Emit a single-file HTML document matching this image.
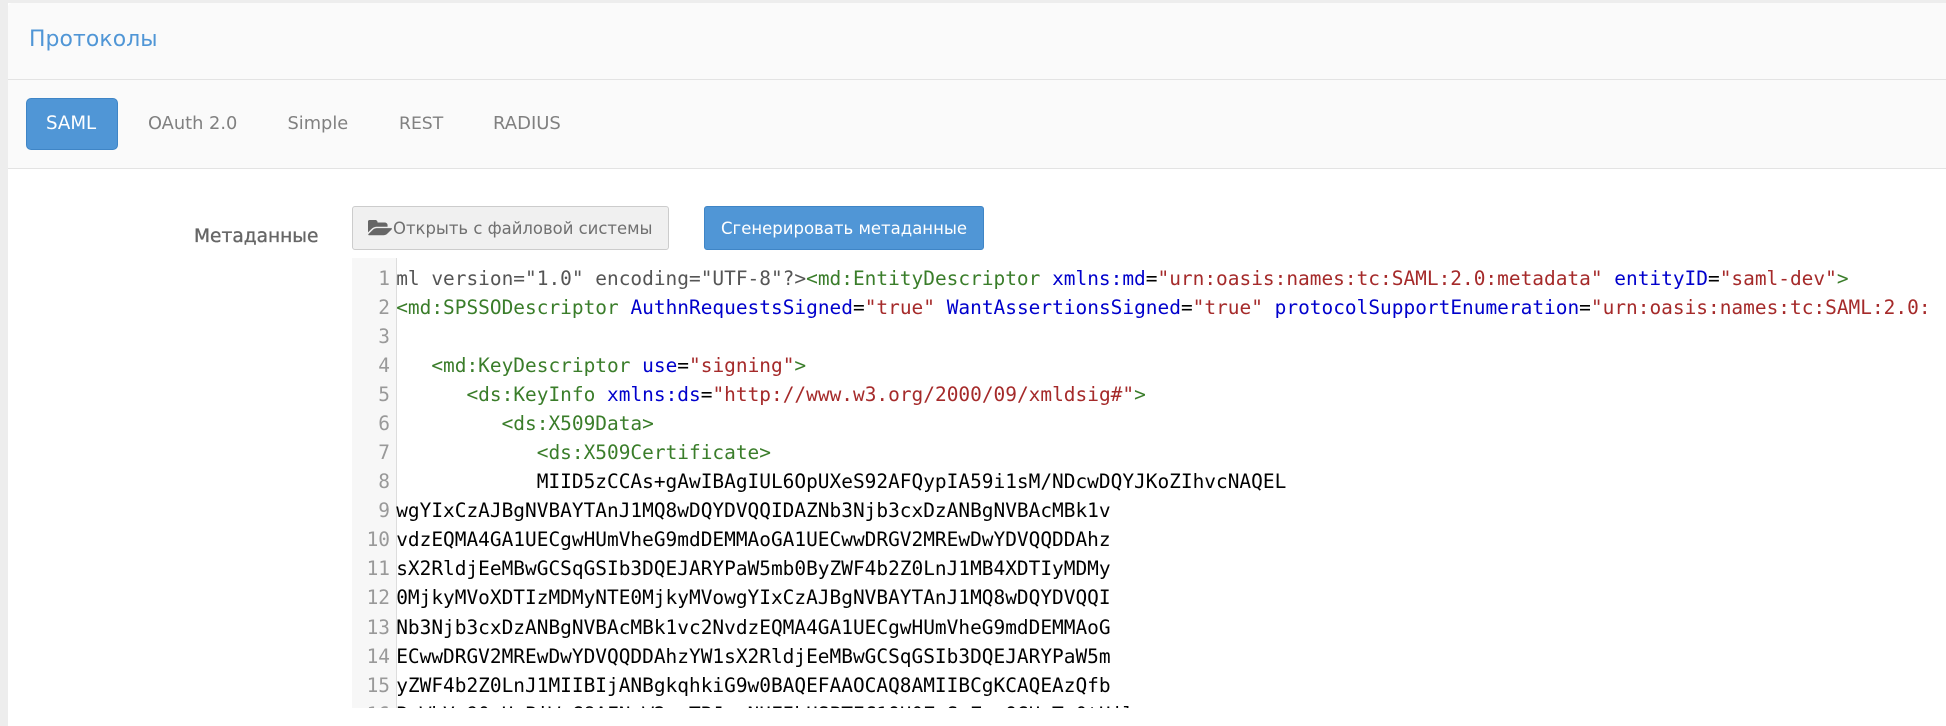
<!DOCTYPE html>
<html><head><meta charset="utf-8">
<style>
html,body{margin:0;padding:0;background:#fff}
body{width:1946px;height:726px;overflow:hidden;position:relative;font-family:"DejaVu Sans","Liberation Sans",sans-serif}
.a{position:absolute}
.t{position:absolute;white-space:nowrap;line-height:30px;height:30px}
#bgl{left:0;top:0;width:8px;height:726px;background:#ededed}
#bgt{left:0;top:0;width:1946px;height:3px;background:#ededed}
#panel{left:8px;top:3px;width:1938px;height:723px;background:#fff;border-top-left-radius:4px;overflow:hidden}
#h1{left:0;top:0;width:1938px;height:76px;background:#fafafa;border-bottom:1px solid #e3e3e3}
#h2{left:0;top:77px;width:1938px;height:88px;background:#fafafa;border-bottom:1px solid #e3e3e3}
#code{left:352px;top:258px;width:1582px;height:450px;overflow:hidden;font-family:"DejaVu Sans Mono",monospace;font-size:19.47px}
#gut{left:0;top:0;width:44px;height:450px;background:#f7f7f7;border-right:1px solid #ddd}
.l{position:absolute;left:44.2px;white-space:pre;line-height:29px;height:29px;color:#000}
.n{position:absolute;left:0;width:38px;text-align:right;line-height:29px;height:29px;color:#999}
.g{color:#3a7d2a}.b{color:#0000cc}.r{color:#a52a2a}.m{color:#555}
</style></head><body>
<div class="a" id="bgl"></div><div class="a" id="bgt"></div>
<div class="a" id="panel"><div class="a" id="h1"></div><div class="a" id="h2"></div></div>

<div class="t" style="left:29px;top:25px;font-size:21.9px;letter-spacing:.1px;color:#5096d6">Протоколы</div>

<div class="a" style="left:26px;top:98px;width:90px;height:50px;background:#5096d6;border:1px solid #3f85c6;border-radius:5px"></div>
<div class="t" style="left:46px;top:109px;font-size:18.2px;color:#fff">SAML</div>
<div class="t" style="left:148px;top:109px;font-size:17.8px;color:#808080">OAuth 2.0</div>
<div class="t" style="left:287.500px;top:109px;font-size:17.8px;color:#808080">Simple</div>
<div class="t" style="left:399px;top:109px;font-size:17.2px;color:#808080">REST</div>
<div class="t" style="left:493px;top:109px;font-size:18px;color:#808080">RADIUS</div>

<div class="t" style="left:194px;top:222px;font-size:18.6px;-webkit-text-stroke:.35px #666;color:#666">Метаданные</div>

<div class="a" style="left:352px;top:206px;width:315px;height:42px;background:#f0f0f0;border:1px solid #ccc;border-radius:3px"></div>
<svg class="a" style="left:368px;top:220px" width="25" height="18" viewBox="0 0 1920 1664" preserveAspectRatio="none"><path fill="#666" d="M1845 931q0 35-53 93l-336 396q-43 51-120.500 86.500t-143.500 35.500h-1088q-34 0-60.500-13t-26.500-43q0-35 53-93l336-396q43-51 120.500-86.500t143.500-35.500h1088q34 0 60.500 13t26.500 43zm-343-344v160h-832q-94 0-197 47.500t-164 119.500l-337 396-5 6q0-4-.5-12.500t-.5-12.500v-960q0-92 66-158t158-66h320q92 0 158 66t66 158v32h544q92 0 158 66t66 158z" transform="translate(0,-128)"/></svg>
<div class="t" style="left:393px;top:214px;font-size:16.45px;color:#707070">Открыть с файловой системы</div>

<div class="a" style="left:704px;top:206px;width:278px;height:42px;background:#5096d6;border:1px solid #3f85c6;border-radius:3px"></div>
<div class="t" style="left:721px;top:214px;font-size:16.5px;color:#fff">Сгенерировать метаданные</div>

<div class="a" id="code">
<div class="a" id="gut"></div>
<div class="n" style="top:6px">1</div>
<div class="n" style="top:35px">2</div>
<div class="n" style="top:64px">3</div>
<div class="n" style="top:93px">4</div>
<div class="n" style="top:122px">5</div>
<div class="n" style="top:151px">6</div>
<div class="n" style="top:180px">7</div>
<div class="n" style="top:209px">8</div>
<div class="n" style="top:238px">9</div>
<div class="n" style="top:267px">10</div>
<div class="n" style="top:296px">11</div>
<div class="n" style="top:325px">12</div>
<div class="n" style="top:355px">13</div>
<div class="n" style="top:384px">14</div>
<div class="n" style="top:413px">15</div>
<div class="n" style="top:442px">16</div>
<div class="l" style="top:6px"><span class="m">ml version="1.0" encoding="UTF-8"?&gt;</span><span class="g">&lt;md:EntityDescriptor</span> <span class="b">xmlns:md</span>=<span class="r">"urn:oasis:names:tc:SAML:2.0:metadata"</span> <span class="b">entityID</span>=<span class="r">"saml-dev"</span><span class="g">&gt;</span></div>
<div class="l" style="top:35px"><span class="g">&lt;md:SPSSODescriptor</span> <span class="b">AuthnRequestsSigned</span>=<span class="r">"true"</span> <span class="b">WantAssertionsSigned</span>=<span class="r">"true"</span> <span class="b">protocolSupportEnumeration</span>=<span class="r">"urn:oasis:names:tc:SAML:2.0:</span></div>
<div class="l" style="top:93px">   <span class="g">&lt;md:KeyDescriptor</span> <span class="b">use</span>=<span class="r">"signing"</span><span class="g">&gt;</span></div>
<div class="l" style="top:122px">      <span class="g">&lt;ds:KeyInfo</span> <span class="b">xmlns:ds</span>=<span class="r">"http://www.w3.org/2000/09/xmldsig#"</span><span class="g">&gt;</span></div>
<div class="l" style="top:151px">         <span class="g">&lt;ds:X509Data&gt;</span></div>
<div class="l" style="top:180px">            <span class="g">&lt;ds:X509Certificate&gt;</span></div>
<div class="l" style="top:209px">            MIID5zCCAs+gAwIBAgIUL6OpUXeS92AFQypIA59i1sM/NDcwDQYJKoZIhvcNAQEL</div>
<div class="l" style="top:238px">wgYIxCzAJBgNVBAYTAnJ1MQ8wDQYDVQQIDAZNb3Njb3cxDzANBgNVBAcMBk1v</div>
<div class="l" style="top:267px">vdzEQMA4GA1UECgwHUmVheG9mdDEMMAoGA1UECwwDRGV2MREwDwYDVQQDDAhz</div>
<div class="l" style="top:296px">sX2RldjEeMBwGCSqGSIb3DQEJARYPaW5mb0ByZWF4b2Z0LnJ1MB4XDTIyMDMy</div>
<div class="l" style="top:325px">0MjkyMVoXDTIzMDMyNTE0MjkyMVowgYIxCzAJBgNVBAYTAnJ1MQ8wDQYDVQQI</div>
<div class="l" style="top:355px">Nb3Njb3cxDzANBgNVBAcMBk1vc2NvdzEQMA4GA1UECgwHUmVheG9mdDEMMAoG</div>
<div class="l" style="top:384px">ECwwDRGV2MREwDwYDVQQDDAhzYW1sX2RldjEeMBwGCSqGSIb3DQEJARYPaW5m</div>
<div class="l" style="top:413px">yZWF4b2Z0LnJ1MIIBIjANBgkqhkiG9w0BAQEFAAOCAQ8AMIIBCgKCAQEAzQfb</div>
<div class="l" style="top:442px">BvWbVs90cHcPiWwG8AFNyW2pxTBJqrNUFIhUSPTEC1QU0ZxSrZnpQGUyTy0tHjl</div>
</div>
</body></html>
